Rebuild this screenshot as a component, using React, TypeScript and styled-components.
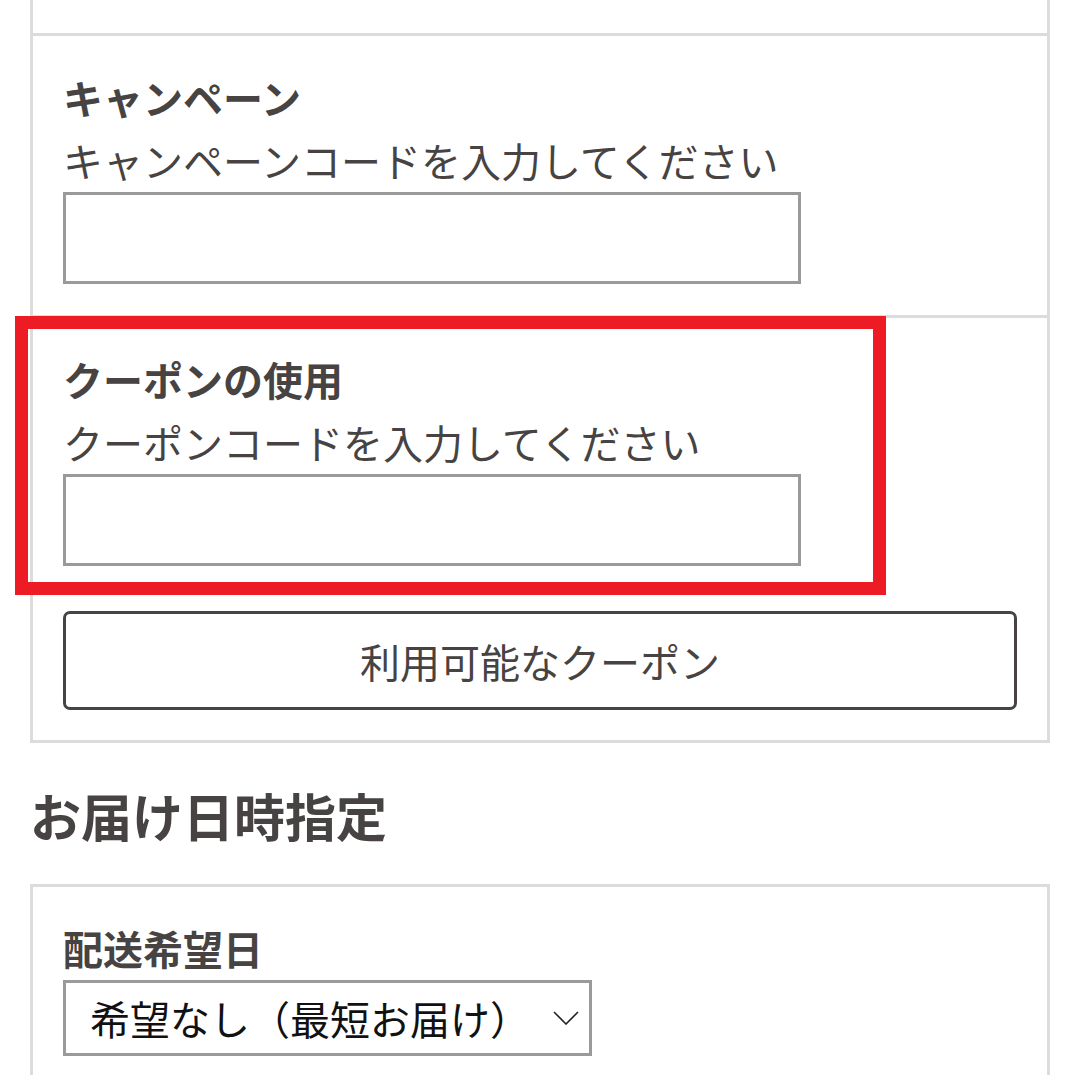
import * as React from 'react';
import styled, { createGlobalStyle } from 'styled-components';

const GlobalStyle = createGlobalStyle`
  html, body {
    margin: 0;
    padding: 0;
    background: #ffffff;
  }
  body {
    font-family: "Noto Sans CJK JP", "Noto Sans", sans-serif;
    color: #464342;
  }
`;

const Page = styled.div`
  padding: 0 30px;
  width: 1080px;
  box-sizing: border-box;
`;

const Panel = styled.section<{ top?: boolean }>`
  box-sizing: border-box;
  width: 1020px;
  border: 3px solid #dcdcdc;
  border-top: ${(props) => (props.top ? 'none' : '3px solid #dcdcdc')};
`;

const PanelRow = styled.div<{ first?: boolean; spacer?: number }>`
  position: relative;
  padding: 36px 30px 31px;
  border-top: ${(props) => (props.first ? 'none' : '3px solid #dcdcdc')};
  ${(props) => (props.spacer !== undefined ? `height:${props.spacer}px; padding:0;` : '')}
`;

const FieldTitle = styled.h3<{ tight?: boolean }>`
  margin: 0 0 ${(props) => (props.tight ? '7px' : '10px')};
  font-size: 40px;
  line-height: 50px;
  font-weight: 700;
`;

const FieldHint = styled.p`
  margin: 0 0 4px;
  font-size: 40px;
  line-height: 56px;
  font-weight: 400;
`;

const CodeInput = styled.input`
  display: block;
  box-sizing: border-box;
  width: 738px;
  height: 92px;
  margin: 0;
  border: 3px solid #9a9a9a;
  border-radius: 0;
  padding: 0 20px;
  font-size: 36px;
  font-family: inherit;
  outline: none;
  background: #ffffff;
`;

const OutlineButton = styled.button`
  display: block;
  box-sizing: border-box;
  width: 100%;
  height: 99px;
  margin-top: 45px;
  border: 3px solid #464342;
  border-radius: 7px;
  background: #ffffff;
  color: #464342;
  font-family: inherit;
  font-size: 40px;
  cursor: pointer;
`;

const SectionHeading = styled.h2`
  margin: 37px 0 34px;
  font-size: 51px;
  line-height: 70px;
  font-weight: 700;
`;

const SelectBox = styled.div`
  box-sizing: border-box;
  display: flex;
  align-items: center;
  justify-content: space-between;
  width: 529px;
  height: 76px;
  border: 3px solid #9a9a9a;
  padding: 0 10px 0 24px;
  color: #111111;
  font-size: 40px;
  cursor: pointer;
  svg {
    flex: none;
  }
`;

const Highlight = styled.div`
  position: absolute;
  left: -18px;
  top: -2px;
  width: 871px;
  height: 279px;
  box-sizing: border-box;
  border: 13px solid #ed1c24;
  pointer-events: none;
`;

const Chevron = () => (
  <svg width="26" height="14" viewBox="0 0 26 14">
    <path d="M1 1 L13 13 L25 1" fill="none" stroke="#222" strokeWidth="1.6" />
  </svg>
);

const App = () => {
  const codeFields = [
    { title: 'キャンペーン', hint: 'キャンペーンコードを入力してください', marked: false },
    { title: 'クーポンの使用', hint: 'クーポンコードを入力してください', marked: true },
  ];

  return (
    <Page>
      <GlobalStyle />
      <Panel top>
        <PanelRow first spacer={33} />
        {codeFields.map((item) => (
          <PanelRow key={item.title} style={item.marked ? { paddingBottom: 30 } : undefined}>
            <FieldTitle>{item.title}</FieldTitle>
            <FieldHint>{item.hint}</FieldHint>
            <CodeInput type="text" aria-label={item.title} />
            {item.marked && <Highlight />}
            {item.marked && <OutlineButton type="button">利用可能なクーポン</OutlineButton>}
          </PanelRow>
        ))}
      </Panel>

      <SectionHeading>お届け日時指定</SectionHeading>

      <Panel>
        <PanelRow first>
          <FieldTitle tight>配送希望日</FieldTitle>
          <SelectBox role="combobox">
            <span>希望なし（最短お届け）</span>
            <Chevron />
          </SelectBox>
        </PanelRow>
      </Panel>
    </Page>
  );
};

export default App;
